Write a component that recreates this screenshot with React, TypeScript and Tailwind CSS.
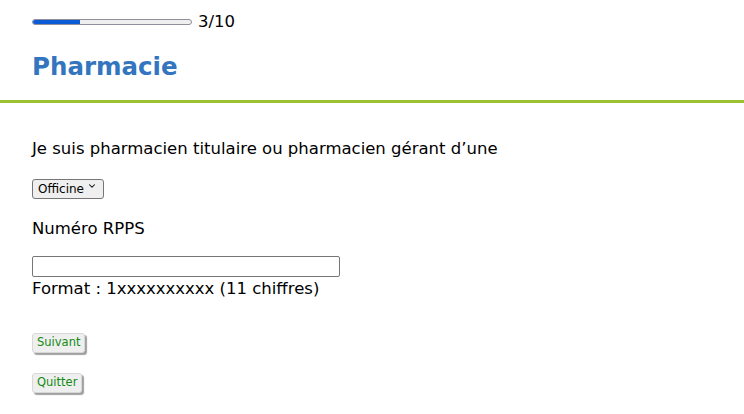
import { ChevronDown } from "lucide-react";

const font = "font-['DejaVu_Sans',Verdana,sans-serif]";

export default function App() {
  return (
    <div className={`min-h-screen bg-white text-black ${font}`}>
      <header className="px-8 pt-3 pb-[17px] border-b-[3px] border-[#9bc232]">
        <div className="flex items-center gap-[6px] h-5">
          <div className="w-[160px] h-[6px] rounded-full bg-[#efefef] border border-[#8f8f9d] overflow-hidden">
            <div className="w-[30%] h-full bg-[#0b5bd7]" />
          </div>
          <span className="text-[16.5px] leading-5">3/10</span>
        </div>
        <h1 className="mt-[19px] text-[24.5px] leading-8 font-bold text-[#3375bf]">Pharmacie</h1>
      </header>

      <main className="px-8">
        <p className="mt-[34px] text-[16.5px] leading-6">
          Je suis pharmacien titulaire ou pharmacien gérant d’une
        </p>

        <div className="relative mt-[15px] w-[72px] h-[20px]">
          <select className="appearance-none w-full h-full py-0 pl-[5px] pr-4 text-[12px] leading-[18px] bg-[#efefef] border border-[#767676] rounded-[3px]">
            <option>Officine</option>
          </select>
          <ChevronDown size={10} strokeWidth={2.5} className="absolute right-[7px] top-[5px] pointer-events-none" />
        </div>

        <p className="mt-[21px] text-[16.5px] leading-6">Numéro RPPS</p>

        <input
          type="text"
          className="block mt-[15px] w-[308px] h-[21px] border border-[#767676] rounded-[2px] px-1 text-[13px]"
        />
        <p className="text-[16.5px] leading-6">Format : 1xxxxxxxxxx (11 chiffres)</p>

        <div className="mt-8 flex flex-col items-start gap-5">
          <button className="h-[20px] px-[4px] text-[11.5px] leading-none text-[#138a13] bg-[#efefef] border border-[#d8d8d8] rounded-[3px] shadow-[2px_2px_1px_#a0a0a0]">
            Suivant
          </button>
          <button className="h-[20px] px-[4px] text-[11.5px] leading-none text-[#138a13] bg-[#efefef] border border-[#d8d8d8] rounded-[3px] shadow-[2px_2px_1px_#a0a0a0]">
            Quitter
          </button>
        </div>
      </main>
    </div>
  );
}
